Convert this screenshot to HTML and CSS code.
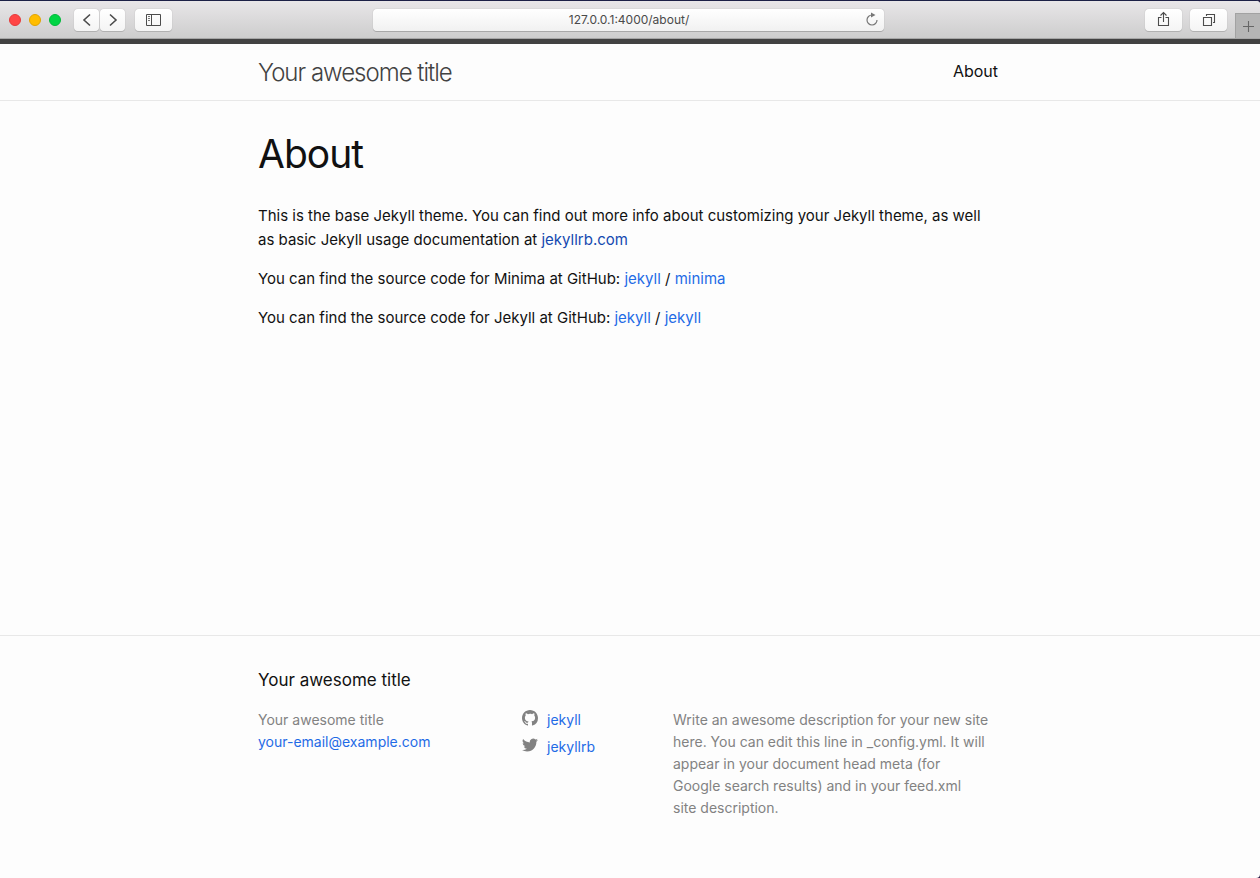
FILE: index.html
```html
<!DOCTYPE html>
<html lang="en">
<head>
<meta charset="utf-8">
<meta name="viewport" content="width=device-width, initial-scale=1">
<title>About</title>
<link rel="stylesheet" href="styles.css">
</head>
<body>
<div class="window">
  <div class="toolbar">
    <div class="tools tools-left">
      <div class="lights">
        <button class="light light-close" aria-label="Close"></button>
        <button class="light light-min" aria-label="Minimize"></button>
        <button class="light light-zoom" aria-label="Zoom"></button>
      </div>
      <div class="nav-buttons">
        <button class="tool tool-nav" aria-label="Back"><svg width="24" height="22" viewBox="0 0 24 22"><path d="M15 5.500l-6 5.500 6 5.500" fill="none" stroke="#4c4c4c" stroke-width="1.600"/></svg></button>
        <button class="tool tool-nav" aria-label="Forward"><svg width="24" height="22" viewBox="0 0 24 22"><path d="M9 5.500l6 5.500-6 5.500" fill="none" stroke="#4c4c4c" stroke-width="1.600"/></svg></button>
      </div>
      <button class="tool" aria-label="Sidebar"><svg width="15" height="12" viewBox="0 0 15 12"><path d="M.5.5h14v11H.5zM5.500.5v11" fill="none" stroke="#4c4c4c"/><path d="M2 2.500h2M2 4.500h2M2 6.500h2" fill="none" stroke="#777"/></svg></button>
    </div>
    <div class="address">
      <input class="address-input" type="text" aria-label="Address" value="127.0.0.1:4000/about/">
      <button class="reload" aria-label="Reload"><svg width="14" height="15" viewBox="0 0 14 15"><path d="M7 3a5 5 0 1 0 5 5" fill="none" stroke="#777" stroke-width="1.200"/><path d="M6 .5L10.500 3 6 5.500z" fill="#777"/></svg></button>
    </div>
    <div class="tools tools-right">
      <button class="tool" aria-label="Share"><svg width="13" height="17" viewBox="0 0 13 17"><path d="M4.500 6.500h-3v8h10v-8h-3M6.500 11V2M3.500 4.500l3-3 3 3" fill="none" stroke="#4c4c4c" stroke-width="1.100"/></svg></button>
      <button class="tool" aria-label="Show tabs"><svg width="14" height="14" viewBox="0 0 14 14"><path d="M1.500 4.500h8v8h-8zM4.500 3V1.500h8v8H11" fill="none" stroke="#4c4c4c" stroke-width="1.100"/></svg></button>
      <button class="new-tab" aria-label="New tab"><svg width="13" height="13" viewBox="0 0 13 13"><path d="M6.500 1v11M1 6.500h11" stroke="#666" stroke-width="1.100"/></svg></button>
    </div>
  </div>

  <header class="site-header">
    <div class="wrapper header-row">
      <a class="site-title" href="#">Your awesome title</a>
      <nav><a class="page-link" href="#">About</a></nav>
    </div>
  </header>

  <main class="page-content">
    <article class="wrapper">
      <h1 class="post-title">About</h1>
      <p>This is the base Jekyll theme. You can find out more info about customizing your Jekyll theme, as well<br>as basic Jekyll usage documentation at <a class="visited" href="#">jekyllrb.com</a></p>
      <p>You can find the source code for Minima at GitHub: <a href="#">jekyll</a> / <a href="#">minima</a></p>
      <p>You can find the source code for Jekyll at GitHub: <a href="#">jekyll</a> / <a href="#">jekyll</a></p>
    </article>
  </main>

  <footer class="site-footer">
    <div class="wrapper">
      <h2 class="footer-heading">Your awesome title</h2>
      <div class="footer-columns">
        <ul class="contact">
          <li>Your awesome title</li>
          <li><a href="#">your-email@example.com</a></li>
        </ul>
        <ul class="social">
          <li><a class="social-link" href="#"><svg class="social-icon" viewBox="0 0 16 16"><path d="M8 0C3.580 0 0 3.582 0 8c0 3.535 2.292 6.533 5.470 7.590.4.075.547-.172.547-.385 0-.19-.007-.693-.01-1.360-2.226.483-2.695-1.073-2.695-1.073-.364-.924-.889-1.170-.889-1.170-.726-.496.055-.486.055-.486.803.056 1.226.824 1.226.824.714 1.223 1.873.87 2.329.665.072-.517.279-.87.508-1.070-1.777-.202-3.644-.888-3.644-3.954 0-.873.311-1.587.823-2.147-.082-.202-.357-1.016.078-2.117 0 0 .672-.215 2.201.82A7.670 7.670 0 0 1 8 3.868c.68.003 1.365.092 2.004.27 1.527-1.035 2.198-.82 2.198-.82.437 1.101.162 1.915.08 2.117.513.56.823 1.274.823 2.147 0 3.073-1.870 3.750-3.653 3.947.287.248.543.735.543 1.481 0 1.070-.01 1.933-.01 2.195 0 .215.144.463.55.385A8.001 8.001 0 0 0 16 8c0-4.418-3.582-8-8-8z"/></svg><span>jekyll</span></a></li>
          <li><a class="social-link" href="#"><svg class="social-icon" viewBox="0 0 16 16"><path d="M15.969 3.058c-.586.26-1.217.436-1.878.515.675-.405 1.194-1.045 1.438-1.809-.632.375-1.332.647-2.076.793A3.270 3.270 0 0 0 7.880 5.538a9.280 9.280 0 0 1-6.738-3.415 3.268 3.268 0 0 0 1.011 4.364 3.254 3.254 0 0 1-1.480-.409v.041a3.270 3.270 0 0 0 2.622 3.205 3.274 3.274 0 0 1-1.476.056 3.271 3.271 0 0 0 3.053 2.270A6.558 6.558 0 0 1 .034 13.004a9.252 9.252 0 0 0 5.010 1.468c6.013 0 9.301-4.981 9.301-9.301 0-.142-.003-.283-.009-.423a6.644 6.644 0 0 0 1.631-1.692z"/></svg><span>jekyllrb</span></a></li>
        </ul>
        <p class="description">Write an awesome description for your new site<br>here. You can edit this line in _config.yml. It will<br>appear in your document head meta (for<br>Google search results) and in your feed.xml<br>site description.</p>
      </div>
    </div>
  </footer>
</div>
</body>
</html>
```

FILE: styles.css
```css
* { box-sizing: border-box; }

body {
  margin: 0;
  background: #241a42;
  color: #111;
  font: 15px/24px Inter, "Liberation Sans", sans-serif;
}

a { color: #1f6be6; text-decoration: none; }
.visited { color: #1449b0; }
p { margin: 0 0 15px; }
ul { margin: 0; padding: 0; list-style: none; }
button { padding: 0; border: 0; }
svg { display: block; }

.window {
  display: flex;
  flex-direction: column;
  min-height: 100vh;
  overflow: hidden;
  background: #fdfdfd;
  border-top: 1px solid #1c2046;
  border-radius: 0 4px 4px 0;
}

/* Browser toolbar */
.toolbar {
  display: grid;
  grid-template-columns: 1fr minmax(200px, 512px) 1fr;
  align-items: center;
  height: 38px;
  background: linear-gradient(#e8e6e8, #cdcdcd);
  border-bottom: 1px solid #a6a6a6;
}

.tools { display: flex; align-items: center; }
.tools-left { gap: 9px; padding-left: 9px; }
.tools-right { justify-content: flex-end; align-self: stretch; gap: 8px; }

.lights { display: flex; gap: 8px; margin-right: 4px; }
.light { width: 12px; height: 12px; border-radius: 50%; }
.light-close { background: #ff4545; border: 1px solid #e53a3a; }
.light-min { background: #ffbd00; border: 1px solid #e2a400; }
.light-zoom { background: #00d544; border: 1px solid #00b93a; }

.nav-buttons { display: flex; gap: 1px; margin-right: 1px; }

.tool {
  display: flex;
  align-items: center;
  justify-content: center;
  width: 37px;
  height: 22px;
  background: linear-gradient(#fff, #f4f4f4);
  border-radius: 4px;
  box-shadow: 0 0 1px #999, 0 1px 0 #b4b4b4;
}
.tool-nav { width: 25px; }

.new-tab {
  display: flex;
  align-items: center;
  justify-content: center;
  align-self: flex-end;
  width: 25px;
  height: 25px;
  background: #b5b5b5;
  border-left: 1px solid #a2a2a2;
  border-top: 1px solid #a2a2a2;
}

.address {
  display: flex;
  align-items: center;
  height: 22px;
  margin: 0 2px 0 -1px;
  padding: 0 5px 0 20px;
  background: linear-gradient(#fff, #f1f1f1);
  border-radius: 4px;
  box-shadow: 0 0 1px #999, 0 1px 0 #aaa;
}
.address-input {
  flex: 1;
  min-width: 0;
  padding: 0;
  border: 0;
  background: none;
  color: #4a4a4a;
  font: 12px/20px Inter, sans-serif;
  text-align: center;
}
.reload { background: none; }

/* Site */
.wrapper {
  width: 100%;
  max-width: 804px;
  margin: 0 auto;
  padding: 0 34px 0 30px;
}

.site-header { border-top: 5px solid #424242; border-bottom: 1px solid #e8e8e8; }
.header-row { display: flex; justify-content: space-between; height: 56px; }
.site-title {
  color: #424242;
  font-size: 24px;
  font-weight: 300;
  line-height: 58px;
  letter-spacing: -1px;
}
.page-link { color: #111; font-size: 16px; line-height: 54px; }

.page-content { flex: 1; padding: 30px 0; }
.post-title {
  margin: 0 0 27px;
  font-size: 39px;
  font-weight: 400;
  line-height: 46px;
  letter-spacing: -1px;
}

.site-footer { padding: 30px 0 44px; border-top: 1px solid #e8e8e8; }
.footer-heading { margin: 0 0 15px; font-size: 17px; font-weight: 400; line-height: 28px; }
.footer-columns {
  display: grid;
  grid-template-columns: 264px 151px 1fr;
  color: #828282;
  font-size: 14px;
  line-height: 22px;
}
.social { display: grid; gap: 5px; align-content: start; }
.social-link { display: flex; gap: 9px; }
.social-icon { width: 16px; height: 16px; margin-top: 1px; fill: #828282; }
.description { margin-bottom: 15px; }
```
